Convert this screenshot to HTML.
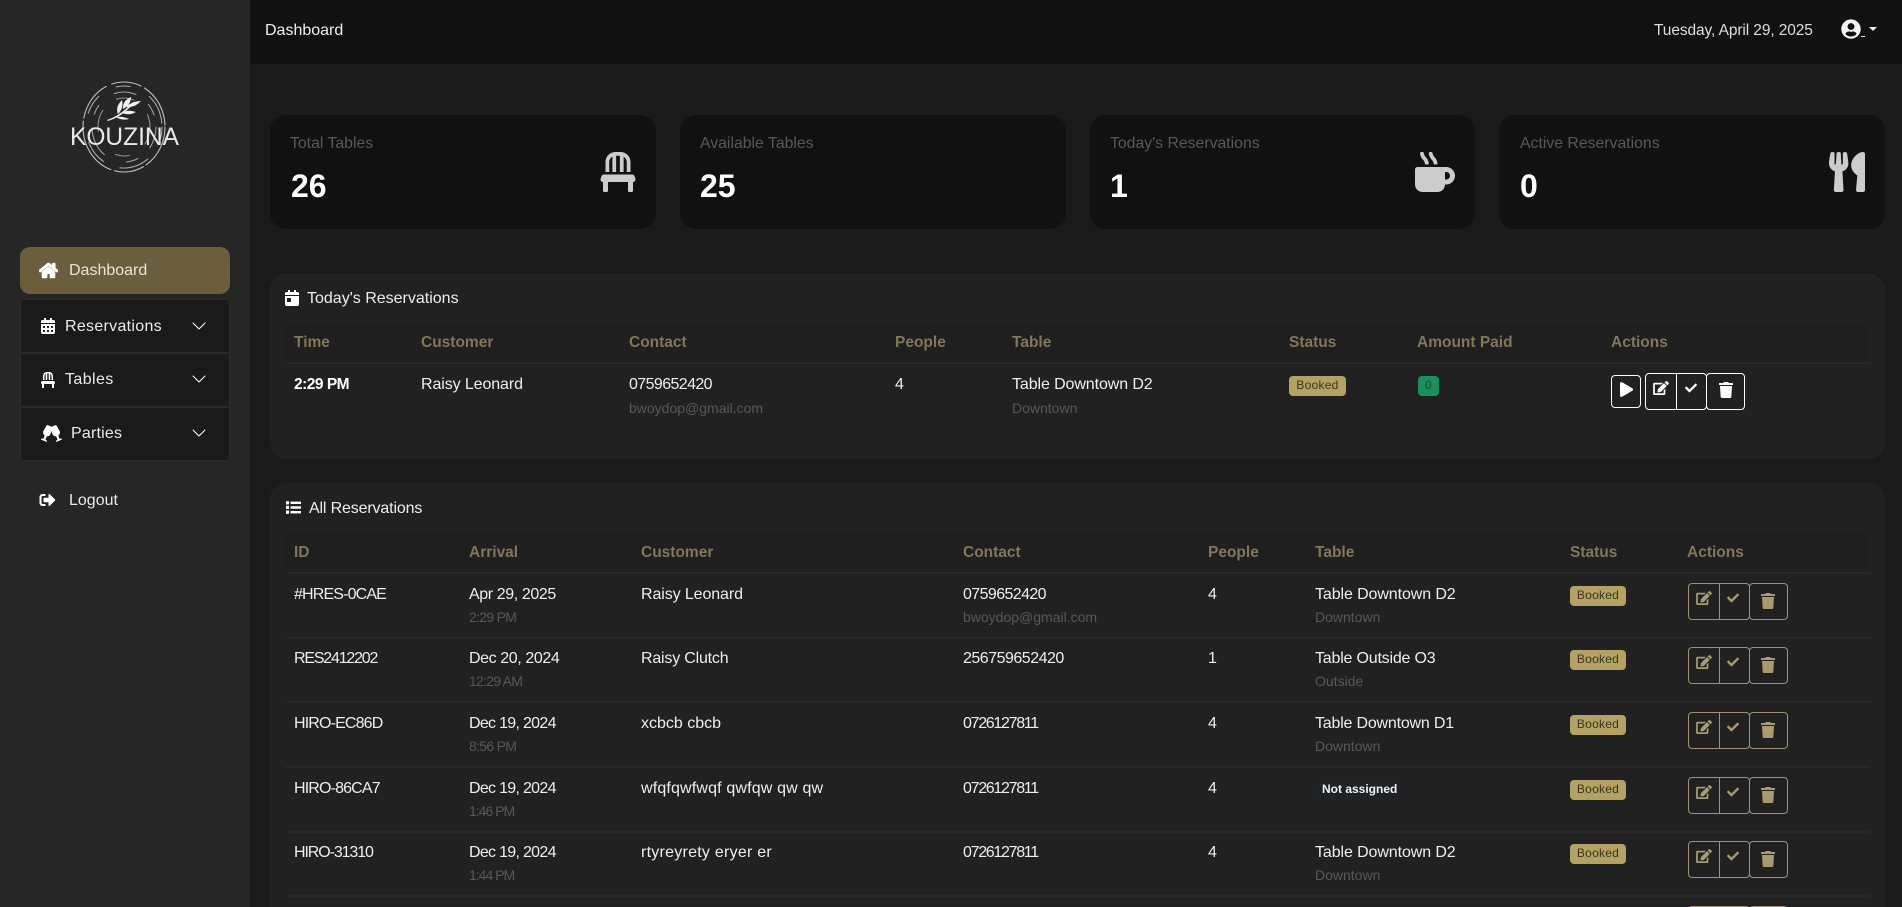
<!DOCTYPE html>
<html lang="en">
<head>
<meta charset="utf-8">
<title>Dashboard</title>
<style>
html,body{margin:0;padding:0;width:1902px;height:907px;overflow:hidden;background:#1a1a1a;font-family:"Liberation Sans",sans-serif;color:#eee;font-size:16px}
*{box-sizing:border-box}
#r{position:relative;width:1902px;height:907px;overflow:hidden}
.a,.t,svg.i{position:absolute}
.t{white-space:nowrap;line-height:20px;height:20px}
#side{position:absolute;left:0;top:0;width:250px;height:907px;background:#262626}
#head{position:absolute;left:250px;top:0;width:1652px;height:64px;background:#111}
.stat{position:absolute;top:115px;height:114px;width:386px;background:#111;border-radius:16px}
.sl{font-size:15.8px;color:#585858;top:19px}
.sn{font-size:32px;font-weight:700;color:#fff;line-height:36px;height:36px;top:53px}
.panel{position:absolute;left:270px;width:1615px;background:#212121;border-radius:16px}
.th{font-weight:700;color:#82775a;font-size:15.5px}
.line{position:absolute;height:2px;background:#282828}
.sub{font-size:14px;color:#585858}
.row{position:absolute;left:0;top:0;width:1902px;height:65px}
.row .t{top:12px}
.row .sub{top:34px}
.bd{position:absolute;background:#b3a263;color:#3a3420;font-size:12px;letter-spacing:.25px;border-radius:4px;text-align:center;line-height:19px;height:20px}
.b{position:absolute;border:1px solid #9f9370;height:37px}
.g{fill:#a89b74}
.w{fill:#fff}
.bold{stroke:#fff;stroke-width:20}
</style>
</head>
<body>
<div id="r">
<svg width="0" height="0" style="position:absolute">
<symbol id="home" viewBox="0 0 576 512"><path d="M280.37 148.26L96 300.11V464a16 16 0 0 0 16 16l112.06-.29a16 16 0 0 0 15.92-16V368a16 16 0 0 1 16-16h64a16 16 0 0 1 16 16v95.64a16 16 0 0 0 16 16.05L464 480a16 16 0 0 0 16-16V300L295.67 148.26a12.19 12.19 0 0 0-15.3 0zM571.6 251.47L488 182.56V44.05a12 12 0 0 0-12-12h-56a12 12 0 0 0-12 12v72.61L318.47 43a48 48 0 0 0-61 0L4.34 251.47a12 12 0 0 0-1.6 16.9l25.5 31A12 12 0 0 0 45.15 301l235.22-193.74a12.19 12.19 0 0 1 15.3 0L530.9 301a12 12 0 0 0 16.9-1.6l25.5-31a12 12 0 0 0-1.7-16.93z"/></symbol>
<symbol id="trash" viewBox="0 0 448 512"><path d="M432 32H312l-9.4-18.7A24 24 0 0 0 281.1 0H166.8a23.72 23.72 0 0 0-21.4 13.3L136 32H16A16 16 0 0 0 0 48v32a16 16 0 0 0 16 16h416a16 16 0 0 0 16-16V48a16 16 0 0 0-16-16zM53.2 467a48 48 0 0 0 47.9 45h245.8a48 48 0 0 0 47.9-45L416 128H32z"/></symbol>
<symbol id="check" viewBox="0 0 512 512"><path d="M173.898 439.404l-166.4-166.4c-9.997-9.997-9.997-26.206 0-36.204l36.203-36.204c9.997-9.998 26.207-9.998 36.204 0L192 312.69 432.095 72.596c9.997-9.997 26.207-9.997 36.204 0l36.203 36.204c9.997 9.997 9.997 26.206 0 36.204l-294.4 294.401c-9.998 9.997-26.207 9.997-36.204-.001z"/></symbol>
<symbol id="play" viewBox="0 0 448 512"><path d="M424.4 214.7L72.4 6.6C43.8-10.3 0 6.1 0 47.9V464c0 37.5 40.7 60.1 72.4 41.3l352-208c31.4-18.5 31.5-64.1 0-82.6z"/></symbol>
<symbol id="edit" viewBox="0 0 576 512"><path d="M402.6 83.2l90.2 90.2c3.8 3.8 3.8 10 0 13.8L274.4 405.6l-92.8 10.3c-12.4 1.4-22.9-9.1-21.5-21.5l10.3-92.8L388.8 83.2c3.8-3.8 10-3.8 13.8 0zm162-22.9l-48.8-48.8c-15.2-15.2-39.9-15.2-55.2 0l-35.4 35.4c-3.8 3.8-3.8 10 0 13.8l90.2 90.2c3.8 3.8 10 3.8 13.8 0l35.4-35.4c15.2-15.3 15.2-40 0-55.2zM384 346.2V448H64V128h229.8c3.2 0 6.2-1.3 8.5-3.5l40-40c7.6-7.6 2.2-20.5-8.5-20.5H48C21.5 64 0 85.5 0 112v352c0 26.5 21.5 48 48 48h352c26.5 0 48-21.5 48-48V306.2c0-10.7-12.9-16-20.5-8.5l-40 40c-2.2 2.3-3.5 5.3-3.5 8.5z"/></symbol>
<symbol id="cal" viewBox="0 0 448 512"><path d="M0 464c0 26.5 21.5 48 48 48h352c26.5 0 48-21.5 48-48V192H0v272zm320-196c0-6.6 5.4-12 12-12h40c6.6 0 12 5.4 12 12v40c0 6.6-5.4 12-12 12h-40c-6.6 0-12-5.4-12-12v-40zm0 128c0-6.6 5.4-12 12-12h40c6.6 0 12 5.4 12 12v40c0 6.6-5.4 12-12 12h-40c-6.6 0-12-5.4-12-12v-40zM192 268c0-6.6 5.4-12 12-12h40c6.6 0 12 5.4 12 12v40c0 6.6-5.4 12-12 12h-40c-6.6 0-12-5.4-12-12v-40zm0 128c0-6.6 5.4-12 12-12h40c6.6 0 12 5.4 12 12v40c0 6.6-5.4 12-12 12h-40c-6.6 0-12-5.4-12-12v-40zM64 268c0-6.6 5.4-12 12-12h40c6.6 0 12 5.4 12 12v40c0 6.6-5.4 12-12 12H76c-6.6 0-12-5.4-12-12v-40zm0 128c0-6.6 5.4-12 12-12h40c6.6 0 12 5.4 12 12v40c0 6.6-5.4 12-12 12H76c-6.6 0-12-5.4-12-12v-40zM400 64h-48V16c0-8.8-7.2-16-16-16h-32c-8.8 0-16 7.2-16 16v48H160V16c0-8.8-7.2-16-16-16h-32c-8.8 0-16 7.2-16 16v48H48C21.5 64 0 85.5 0 112v48h448v-48c0-26.5-21.5-48-48-48z"/></symbol>
<symbol id="day" viewBox="0 0 448 512"><path d="M0 464c0 26.5 21.5 48 48 48h352c26.5 0 48-21.5 48-48V192H0v272zm64-192c0-8.8 7.2-16 16-16h96c8.8 0 16 7.2 16 16v96c0 8.8-7.2 16-16 16H80c-8.8 0-16-7.2-16-16v-96zM400 64h-48V16c0-8.8-7.2-16-16-16h-32c-8.8 0-16 7.2-16 16v48H160V16c0-8.8-7.2-16-16-16h-32c-8.8 0-16 7.2-16 16v48H48C21.5 64 0 85.5 0 112v48h448v-48c0-26.5-21.5-48-48-48z"/></symbol>
<symbol id="list" viewBox="0 0 512 512"><path d="M80 368H16a16 16 0 0 0-16 16v64a16 16 0 0 0 16 16h64a16 16 0 0 0 16-16v-64a16 16 0 0 0-16-16zm0-320H16A16 16 0 0 0 0 64v64a16 16 0 0 0 16 16h64a16 16 0 0 0 16-16V64a16 16 0 0 0-16-16zm0 160H16a16 16 0 0 0-16 16v64a16 16 0 0 0 16 16h64a16 16 0 0 0 16-16v-64a16 16 0 0 0-16-16zm416 176H176a16 16 0 0 0-16 16v32a16 16 0 0 0 16 16h320a16 16 0 0 0 16-16v-32a16 16 0 0 0-16-16zm0-320H176a16 16 0 0 0-16 16v32a16 16 0 0 0 16 16h320a16 16 0 0 0 16-16V80a16 16 0 0 0-16-16zm0 160H176a16 16 0 0 0-16 16v32a16 16 0 0 0 16 16h320a16 16 0 0 0 16-16v-32a16 16 0 0 0-16-16z"/></symbol>
<symbol id="user" viewBox="0 0 496 512"><path d="M248 8C111 8 0 119 0 256s111 248 248 248 248-111 248-248S385 8 248 8zm0 96c48.6 0 88 39.4 88 88s-39.4 88-88 88-88-39.4-88-88 39.4-88 88-88zm0 344c-58.7 0-111.3-26.6-146.5-68.2 18.8-35.4 55.6-59.8 98.5-59.8 2.4 0 4.8.4 7.1 1.1 13 4.2 26.6 6.9 40.9 6.9 14.3 0 28-2.7 40.9-6.9 2.3-.7 4.7-1.1 7.1-1.1 42.9 0 79.7 24.4 98.5 59.8C359.3 421.4 306.7 448 248 448z"/></symbol>
<symbol id="out" viewBox="0 0 512 512"><path d="M497 273L329 441c-15 15-41 4.5-41-17v-96H152c-13.3 0-24-10.7-24-24v-96c0-13.3 10.7-24 24-24h136V88c0-21.4 25.9-32 41-17l168 168c9.3 9.4 9.3 24.6 0 34zM192 436v-40c0-6.6-5.4-12-12-12H96c-17.7 0-32-14.3-32-32V160c0-17.7 14.3-32 32-32h84c6.6 0 12-5.4 12-12V76c0-6.6-5.4-12-12-12H96c-53 0-96 43-96 96v192c0 53 43 96 96 96h84c6.6 0 12-5.4 12-12z"/></symbol>
<symbol id="mug" viewBox="0 0 512 512"><path d="M127.1 146.5c1.3 7.7 8 13.5 16 13.5h16.5c9.8 0 17.6-8.5 16.3-18-3.8-28.2-16.4-54.2-36.6-74.7-14.4-14.7-23.6-33.3-26.4-53.5C111.8 5.9 105 0 96.8 0H80.4C70.6 0 63 8.5 64.1 18c3.9 31.9 18 61.3 40.6 84.4 12 12.2 19.7 27.5 22.4 44.1zm112 0c1.3 7.7 8 13.5 16 13.5h16.5c9.8 0 17.6-8.5 16.3-18-3.8-28.2-16.4-54.2-36.6-74.7-14.4-14.7-23.6-33.3-26.4-53.5C223.8 5.9 217 0 208.8 0h-16.4c-9.8 0-17.5 8.5-16.3 18 3.9 31.9 18 61.3 40.6 84.4 12 12.2 19.7 27.5 22.4 44.1zM400 192H32c-17.7 0-32 14.3-32 32v192c0 53 43 96 96 96h192c53 0 96-43 96-96h16c61.8 0 112-50.2 112-112s-50.2-112-112-112zm0 160h-16v-96h16c26.5 0 48 21.5 48 48s-21.5 48-48 48z"/></symbol>
<symbol id="ute" viewBox="0 0 416 512" preserveAspectRatio="none"><path d="M207.9 15.2c.8 4.7 16.1 94.5 16.1 128.8 0 52.3-27.8 89.6-68.9 104.6L168 486.7c.7 13.7-10.2 25.3-24 25.3H80c-13.7 0-24.7-11.5-24-25.3l12.9-238.1C27.7 233.6 0 196.2 0 144 0 109.6 15.3 19.9 16.1 15.2 19.3-5.1 61.4-5.4 64 16.3v141.2c1.3 3.4 15.1 3.2 16 0 1.4-25.3 7.9-139.2 8-141.8 3.3-20.8 44.7-20.8 47.9 0 .2 2.7 6.6 116.5 8 141.8.9 3.2 14.8 3.4 16 0V16.3c2.6-21.6 44.8-21.4 48-1.1zm119.2 285.7l-15 185.1c-1.2 14 9.9 26 23.9 26h56c13.3 0 24-10.7 24-24V24c0-13.2-10.7-24-24-24-82.5 0-221.4 178.5-64.9 300.9z"/></symbol>
<symbol id="chair" viewBox="0 0 448 512"><path d="M112 128c0-29.5 16.2-55 40-68.9V256h48V48h48v208h48V59.1c23.8 13.9 40 39.4 40 68.9v128h48V128C384 57.3 326.7 0 256 0h-64C121.3 0 64 57.3 64 128v128h48zm334.3 213.9l-10.7-32c-4.4-13.1-16.6-21.9-30.4-21.9H42.7c-13.8 0-26 8.8-30.4 21.9l-10.7 32C-5.2 362.6 10.2 384 32 384v112c0 8.8 7.2 16 16 16h32c8.8 0 16-7.2 16-16V384h256v112c0 8.8 7.2 16 16 16h32c8.8 0 16-7.2 16-16V384c21.8 0 37.2-21.4 30.3-42.1z"/></symbol>
<symbol id="cheers" viewBox="0 0 640 512"><path d="M639.4 433.6c-8.4-20.4-31.8-30.1-52.2-21.6l-22.1 9.2-38.7-101.9c47.9-35 64.8-100.3 34.5-152.8L474.3 16c-8-13.9-25.1-19.7-40-13.6L320 49.8 205.7 2.4c-14.9-6.2-32-.3-40 13.6L79.1 166.5C48.9 219 65.7 284.3 113.6 319.2L74.9 421.1l-22.1-9.2c-20.4-8.5-43.8 1.2-52.2 21.6-1.7 4.1.2 8.8 4.3 10.5l162.3 67.4c4.1 1.7 8.7-.2 10.4-4.3 8.4-20.4-1.2-43.8-21.6-52.3l-22.1-9.2L173.3 342c4.2.5 8.4 1.2 12.6 1.2 48.3 0 91.9-31.2 106.8-79.7l27.3-88.7 27.3 88.7c14.9 48.5 58.4 79.7 106.8 79.7 4.2 0 8.4-.7 12.6-1.2l39 102.8-22.1 9.2c-20.4 8.5-30.1 31.9-21.6 52.3 1.7 4.1 6.4 6 10.4 4.3L634.9 444c4.3-1.7 6.2-6.4 4.5-10.4z"/></symbol>
<symbol id="chev" viewBox="0 0 16 16"><path d="M1.646 4.646a.5.5 0 0 1 .708 0L8 10.293l5.646-5.647a.5.5 0 0 1 .708.708l-6 6a.5.5 0 0 1-.708 0l-6-6a.5.5 0 0 1 0-.708z"/></symbol>
</svg>

<div id="side"></div>
<div id="head"></div>

<!-- logo -->
<svg class="i" style="left:60px;top:70px" width="130" height="110" viewBox="0 0 130 110" fill="none">
<g stroke="#bdbdbd" stroke-width="1.1" stroke-linecap="round">
<ellipse cx="64" cy="57" rx="41" ry="45" stroke-dasharray="44 3 30 4 60 3 40 6 30 4"/>
<ellipse cx="64" cy="57" rx="38" ry="41" stroke-dasharray="14 22 30 18 24 30 20 20" opacity=".85"/>
<ellipse cx="64" cy="57" rx="32" ry="35" stroke-dasharray="22 16 12 24 30 14 10 20" opacity=".8"/>
<ellipse cx="64" cy="57" rx="26" ry="29" stroke-dasharray="18 20 14 30 22 18" opacity=".7"/>
</g>
<g fill="#efefef">
<path d="M47 50 Q60 46 73 32 L74 33 Q62 47 48 51Z"/>
<path d="M58 44 Q55 37 62 30 Q64 38 58 44Z"/>
<path d="M63 39 Q62 31 71 27 Q71 35 63 39Z"/>
<path d="M66 37 Q72 31 81 31 Q75 38 66 37Z"/>
<path d="M62 43 Q68 39 76 42 Q69 46 62 43Z"/>
<path d="M56 47 Q63 46 69 49 Q62 51 56 47Z"/>
</g>
<text x="10" y="75" font-family="Liberation Sans" font-size="25" fill="#e8e8e8" textLength="109" lengthAdjust="spacingAndGlyphs">KOUZINA</text>
</svg>

<!-- nav -->
<div class="a" style="left:20px;top:247px;width:210px;height:47px;background:#6b5e3c;border-radius:10px"></div>
<svg class="i w" style="left:39px;top:262px;stroke:#fff;stroke-width:25" width="19" height="17"><use href="#home"/></svg>
<div class="t" style="left:69px;top:261px;color:#e9e5da">Dashboard</div>

<div class="a" style="left:20px;top:299px;width:210px;height:162px;background:#1a1a1a;border:1px solid #2c2c2c;border-radius:3px"></div>
<div class="a" style="left:20px;top:352px;width:210px;height:2px;background:#2a2a2a"></div>
<div class="a" style="left:20px;top:406px;width:210px;height:2px;background:#2a2a2a"></div>
<svg class="i w" style="left:41px;top:318px" width="14" height="16"><use href="#cal"/></svg>
<div class="t" style="left:65px;top:317px;color:#e8ecec;letter-spacing:.3px">Reservations</div>
<svg class="i w" style="left:191px;top:318px" width="16" height="16"><use href="#chev"/></svg>
<svg class="i w" style="left:41px;top:372px" width="14" height="16"><use href="#chair"/></svg>
<div class="t" style="left:65px;top:370px;color:#e8ecec;letter-spacing:.4px">Tables</div>
<svg class="i w" style="left:191px;top:371px" width="16" height="16"><use href="#chev"/></svg>
<svg class="i w" style="left:41px;top:425px" width="21" height="17"><use href="#cheers"/></svg>
<div class="t" style="left:71px;top:424px;color:#e8ecec;letter-spacing:.2px">Parties</div>
<svg class="i w" style="left:191px;top:425px" width="16" height="16"><use href="#chev"/></svg>
<svg class="i w" style="left:39px;top:492px" width="17" height="16"><use href="#out"/></svg>
<div class="t" style="left:69px;top:491px;color:#e9e9e9">Logout</div>

<!-- header -->
<div class="t" style="left:265px;top:21px;color:#eee">Dashboard</div>
<div class="t" style="left:1654px;top:21px;color:#ddd;font-size:15.5px;letter-spacing:-.1px">Tuesday, April 29, 2025</div>
<svg class="i" style="left:1841px;top:19px;fill:#f4f4f4" width="20" height="20"><use href="#user"/></svg>
<div class="a" style="left:1861px;top:36px;width:4px;height:1px;background:#ddd"></div>
<div class="a" style="left:1869px;top:27px;width:0;height:0;border-left:4px solid transparent;border-right:4px solid transparent;border-top:4px solid #eee"></div>

<!-- stats -->
<div class="stat" style="left:270px"><div class="t sl" style="left:20px">Total Tables</div><div class="t sn" style="left:21px">26</div></div>
<div class="stat" style="left:680px"><div class="t sl" style="left:20px">Available Tables</div><div class="t sn" style="left:20px">25</div></div>
<div class="stat" style="left:1090px;width:385px"><div class="t sl" style="left:20px">Today's Reservations</div><div class="t sn" style="left:20px">1</div></div>
<div class="stat" style="left:1499px"><div class="t sl" style="left:21px">Active Reservations</div><div class="t sn" style="left:21px">0</div></div>
<svg class="i" style="left:600px;top:152px;fill:#ccc" width="36" height="40"><use href="#chair"/></svg>
<svg class="i" style="left:1414px;top:152px;fill:#ccc" width="42" height="40"><use href="#mug"/></svg>
<svg class="i" style="left:1829px;top:152px;fill:#ccc" width="36" height="40"><use href="#ute"/></svg>

<!-- today -->
<div class="panel" style="top:273px;height:186px"></div>
<svg class="i w" style="left:285px;top:290px" width="14" height="16"><use href="#day"/></svg>
<div class="t" style="left:307px;top:289px;color:#eee">Today's Reservations</div>
<div class="a" style="left:286px;top:323px;width:1584px;height:40px;background:#1f1f1f"></div>
<div class="t th" style="left:294px;top:333px">Time</div>
<div class="t th" style="left:421px;top:333px">Customer</div>
<div class="t th" style="left:629px;top:333px">Contact</div>
<div class="t th" style="left:895px;top:333px">People</div>
<div class="t th" style="left:1012px;top:333px">Table</div>
<div class="t th" style="left:1289px;top:333px">Status</div>
<div class="t th" style="left:1417px;top:333px">Amount Paid</div>
<div class="t th" style="left:1611px;top:333px">Actions</div>
<div class="line" style="left:286px;top:362px;width:1584px"></div>
<div class="t" style="left:294px;top:375px;font-weight:700;color:#fff;font-size:15.5px;letter-spacing:-.5px">2:29 PM</div>
<div class="t" style="left:421px;top:375px;letter-spacing:-.1px">Raisy Leonard</div>
<div class="t" style="left:629px;top:375px;letter-spacing:-.6px">0759652420</div>
<div class="t sub" style="left:629px;top:398px">bwoydop@gmail.com</div>
<div class="t" style="left:895px;top:375px">4</div>
<div class="t" style="left:1012px;top:375px;letter-spacing:-.1px">Table Downtown D2</div>
<div class="t sub" style="left:1012px;top:398px">Downtown</div>
<div class="bd" style="left:1289px;top:376px;width:57px">Booked</div>
<div class="bd" style="left:1418px;top:376px;width:21px;background:#1c8f5c;color:#14502f">0</div>
<div class="b" style="left:1611px;top:375px;width:30px;height:33px;border-color:#fff;border-radius:4px"></div>
<svg class="i w" style="left:1620px;top:382px" width="13" height="15"><use href="#play"/></svg>
<div class="b" style="left:1645px;top:373px;width:32px;border-color:#fff;border-radius:4px 0 0 4px"></div>
<div class="b" style="left:1676px;top:373px;width:31px;border-color:#fff;border-radius:0 4px 4px 0"></div>
<div class="b" style="left:1706px;top:373px;width:39px;border-color:#fff;border-radius:4px"></div>
<svg class="i w" style="left:1653px;top:381px" width="16" height="14"><use href="#edit"/></svg>
<svg class="i w" style="left:1685px;top:382px" width="12" height="12"><use href="#check"/></svg>
<svg class="i w" style="left:1719px;top:382px" width="14" height="16"><use href="#trash"/></svg>

<!-- all -->
<div class="panel" style="top:483px;height:440px"></div>
<svg class="i w" style="left:286px;top:500px;stroke:#fff;stroke-width:18" width="15" height="15"><use href="#list"/></svg>
<div class="t" style="left:309px;top:499px;color:#eee;letter-spacing:-.15px">All Reservations</div>
<div class="a" style="left:286px;top:533px;width:1584px;height:40px;background:#1f1f1f"></div>
<div class="t th" style="left:294px;top:543px">ID</div>
<div class="t th" style="left:469px;top:543px">Arrival</div>
<div class="t th" style="left:641px;top:543px">Customer</div>
<div class="t th" style="left:963px;top:543px">Contact</div>
<div class="t th" style="left:1208px;top:543px">People</div>
<div class="t th" style="left:1315px;top:543px">Table</div>
<div class="t th" style="left:1570px;top:543px">Status</div>
<div class="t th" style="left:1687px;top:543px">Actions</div>
<div class="line" style="left:286px;top:572px;width:1584px"></div>
<div class="line" style="left:286px;top:637px;width:1584px"></div>
<div class="line" style="left:286px;top:701px;width:1584px"></div>
<div class="line" style="left:286px;top:766px;width:1584px"></div>
<div class="line" style="left:286px;top:831px;width:1584px"></div>
<div class="line" style="left:286px;top:895px;width:1584px"></div>

<div class="row" style="top:573px">
<div class="t" style="left:294px;letter-spacing:-.85px">#HRES-0CAE</div>
<div class="t" style="left:469px;letter-spacing:-.4px">Apr 29, 2025</div><div class="t sub" style="left:469px;letter-spacing:-.7px">2:29 PM</div>
<div class="t" style="left:641px;letter-spacing:-.1px">Raisy Leonard</div>
<div class="t" style="left:963px;letter-spacing:-.6px">0759652420</div><div class="t sub" style="left:963px">bwoydop@gmail.com</div>
<div class="t" style="left:1208px">4</div>
<div class="t" style="left:1315px;letter-spacing:-.1px">Table Downtown D2</div><div class="t sub" style="left:1315px">Downtown</div>
<div class="bd" style="left:1570px;top:13px;width:56px">Booked</div>
<div class="b" style="left:1688px;top:10px;width:32px;border-radius:4px 0 0 4px"></div><div class="b" style="left:1719px;top:10px;width:31px;border-radius:0 4px 4px 0"></div><div class="b" style="left:1749px;top:10px;width:39px;border-radius:4px"></div>
<svg class="i g" style="left:1696px;top:18px" width="16" height="14"><use href="#edit"/></svg><svg class="i g" style="left:1727px;top:19px" width="12" height="12"><use href="#check"/></svg><svg class="i g" style="left:1761px;top:20px" width="14" height="16"><use href="#trash"/></svg>
</div>

<div class="row" style="top:637px">
<div class="t" style="left:294px;letter-spacing:-1.2px">RES2412202</div>
<div class="t" style="left:469px;letter-spacing:-.4px">Dec 20, 2024</div><div class="t sub" style="left:469px;letter-spacing:-.75px">12:29 AM</div>
<div class="t" style="left:641px;letter-spacing:-.2px">Raisy Clutch</div>
<div class="t" style="left:963px;letter-spacing:-.5px">256759652420</div>
<div class="t" style="left:1208px">1</div>
<div class="t" style="left:1315px;letter-spacing:-.2px">Table Outside O3</div><div class="t sub" style="left:1315px">Outside</div>
<div class="bd" style="left:1570px;top:13px;width:56px">Booked</div>
<div class="b" style="left:1688px;top:10px;width:32px;border-radius:4px 0 0 4px"></div><div class="b" style="left:1719px;top:10px;width:31px;border-radius:0 4px 4px 0"></div><div class="b" style="left:1749px;top:10px;width:39px;border-radius:4px"></div>
<svg class="i g" style="left:1696px;top:18px" width="16" height="14"><use href="#edit"/></svg><svg class="i g" style="left:1727px;top:19px" width="12" height="12"><use href="#check"/></svg><svg class="i g" style="left:1761px;top:20px" width="14" height="16"><use href="#trash"/></svg>
</div>

<div class="row" style="top:702px">
<div class="t" style="left:294px;letter-spacing:-.85px">HIRO-EC86D</div>
<div class="t" style="left:469px;letter-spacing:-.7px">Dec 19, 2024</div><div class="t sub" style="left:469px;letter-spacing:-.7px">8:56 PM</div>
<div class="t" style="left:641px">xcbcb cbcb</div>
<div class="t" style="left:963px;letter-spacing:-1.3px">0726127811</div>
<div class="t" style="left:1208px">4</div>
<div class="t" style="left:1315px;letter-spacing:-.2px">Table Downtown D1</div><div class="t sub" style="left:1315px">Downtown</div>
<div class="bd" style="left:1570px;top:13px;width:56px">Booked</div>
<div class="b" style="left:1688px;top:10px;width:32px;border-radius:4px 0 0 4px"></div><div class="b" style="left:1719px;top:10px;width:31px;border-radius:0 4px 4px 0"></div><div class="b" style="left:1749px;top:10px;width:39px;border-radius:4px"></div>
<svg class="i g" style="left:1696px;top:18px" width="16" height="14"><use href="#edit"/></svg><svg class="i g" style="left:1727px;top:19px" width="12" height="12"><use href="#check"/></svg><svg class="i g" style="left:1761px;top:20px" width="14" height="16"><use href="#trash"/></svg>
</div>

<div class="row" style="top:767px">
<div class="t" style="left:294px;letter-spacing:-.85px">HIRO-86CA7</div>
<div class="t" style="left:469px;letter-spacing:-.7px">Dec 19, 2024</div><div class="t sub" style="left:469px;letter-spacing:-1px">1:46 PM</div>
<div class="t" style="left:641px;letter-spacing:.16px">wfqfqwfwqf qwfqw qw qw</div>
<div class="t" style="left:963px;letter-spacing:-1.3px">0726127811</div>
<div class="t" style="left:1208px">4</div>
<div class="a" style="left:1316px;top:12px;width:84px;height:21px;background:#1f2226;border-radius:4px"></div>
<div class="t" style="left:1322px;font-size:12px;font-weight:700;color:#f2f2f2">Not assigned</div>
<div class="bd" style="left:1570px;top:13px;width:56px">Booked</div>
<div class="b" style="left:1688px;top:10px;width:32px;border-radius:4px 0 0 4px"></div><div class="b" style="left:1719px;top:10px;width:31px;border-radius:0 4px 4px 0"></div><div class="b" style="left:1749px;top:10px;width:39px;border-radius:4px"></div>
<svg class="i g" style="left:1696px;top:18px" width="16" height="14"><use href="#edit"/></svg><svg class="i g" style="left:1727px;top:19px" width="12" height="12"><use href="#check"/></svg><svg class="i g" style="left:1761px;top:20px" width="14" height="16"><use href="#trash"/></svg>
</div>

<div class="row" style="top:831px">
<div class="t" style="left:294px;letter-spacing:-1.1px">HIRO-31310</div>
<div class="t" style="left:469px;letter-spacing:-.7px">Dec 19, 2024</div><div class="t sub" style="left:469px;letter-spacing:-1px">1:44 PM</div>
<div class="t" style="left:641px;letter-spacing:.25px">rtyreyrety eryer er</div>
<div class="t" style="left:963px;letter-spacing:-1.3px">0726127811</div>
<div class="t" style="left:1208px">4</div>
<div class="t" style="left:1315px;letter-spacing:-.1px">Table Downtown D2</div><div class="t sub" style="left:1315px">Downtown</div>
<div class="bd" style="left:1570px;top:13px;width:56px">Booked</div>
<div class="b" style="left:1688px;top:10px;width:32px;border-radius:4px 0 0 4px"></div><div class="b" style="left:1719px;top:10px;width:31px;border-radius:0 4px 4px 0"></div><div class="b" style="left:1749px;top:10px;width:39px;border-radius:4px"></div>
<svg class="i g" style="left:1696px;top:18px" width="16" height="14"><use href="#edit"/></svg><svg class="i g" style="left:1727px;top:19px" width="12" height="12"><use href="#check"/></svg><svg class="i g" style="left:1761px;top:20px" width="14" height="16"><use href="#trash"/></svg>
</div>

<div class="b" style="left:1688px;top:906px;width:32px;border-radius:4px 0 0 4px"></div>
<div class="b" style="left:1719px;top:906px;width:31px;border-radius:0 4px 4px 0"></div>
<div class="b" style="left:1749px;top:906px;width:39px;border-radius:4px"></div>
</div>
</body>
</html>
